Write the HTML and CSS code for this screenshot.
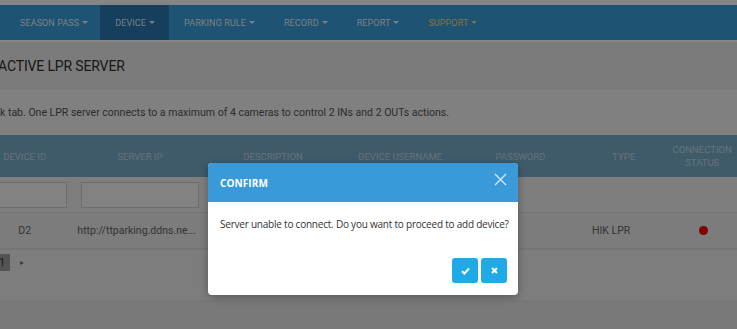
FILE: index.html
```html
<!DOCTYPE html>
<html>
<head>
<meta charset="utf-8">
<link rel="stylesheet" href="styles.css">
</head>
<body>
<div class="page">
  <div class="topstrip"></div>
  <nav class="nav">
    <ul class="menu">
      <li class="item">SEASON PASS <span class="caret"></span></li>
      <li class="item active">DEVICE <span class="caret"></span></li>
      <li class="item">PARKING RULE <span class="caret"></span></li>
      <li class="item">RECORD <span class="caret"></span></li>
      <li class="item">REPORT <span class="caret"></span></li>
      <li class="item support">SUPPORT <span class="caret"></span></li>
    </ul>
  </nav>
  <div class="content">
    <div class="titlebar"><h1 class="title">ACTIVE LPR SERVER</h1></div>
    <div class="info">ick tab. One LPR server connects to a maximum of 4 cameras to control 2 INs and 2 OUTs actions.</div>
    <div class="table">
      <div class="row head">
        <div class="c c1">DEVICE ID</div>
        <div class="c c2">SERVER IP</div>
        <div class="c c3">DESCRIPTION</div>
        <div class="c c4">DEVICE USERNAME</div>
        <div class="c c5">PASSWORD</div>
        <div class="c c6">TYPE</div>
        <div class="c c7">CONNECTION<br>STATUS</div>
      </div>
      <div class="row filters">
        <div class="c c1"><div class="input narrow"></div></div>
        <div class="c c2"><div class="input"></div></div>
        <div class="c c3"></div>
        <div class="c c4"></div>
        <div class="c c5"></div>
        <div class="c c6"></div>
        <div class="c c7"></div>
      </div>
      <div class="row data">
        <div class="c c1">D2</div>
        <div class="c c2 ip">http://ttparking.ddns.ne...</div>
        <div class="c c3"></div>
        <div class="c c4"></div>
        <div class="c c5"></div>
        <div class="c c6 type">HIK LPR</div>
        <div class="c c7"><span class="dot"></span></div>
      </div>
    </div>
    <div class="pager">
      <span class="pbox">1</span>
      <span class="parrow">&#9656;</span>
    </div>
    <div class="footer"></div>
  </div>
</div>

<div class="backdrop"></div>
<div class="modal">
  <div class="mhead">
    <span class="mtitle">CONFIRM</span>
    <svg class="close" width="13" height="13" viewBox="0 0 13 13"><path d="M1 1L12 12M12 1L1 12" stroke="#d8ecf8" stroke-width="1.3" fill="none"/></svg>
  </div>
  <div class="mbody">Server unable to connect. Do you want to proceed to add device?</div>
  <div class="mfoot">
    <button class="btn"><svg width="9" height="8" viewBox="0 0 9 8"><path d="M1 4.2L3.4 6.5L8 1.5" stroke="#fff" stroke-width="2" fill="none"/></svg></button>
    <button class="btn"><svg width="7" height="7" viewBox="0 0 7 7"><path d="M1 1L6 6M6 1L1 6" stroke="#fff" stroke-width="2" fill="none"/></svg></button>
  </div>
</div>
</body>
</html>
```

FILE: styles.css
```css
* { box-sizing: border-box; }
html, body { margin: 0; padding: 0; }
body {
  width: 737px;
  height: 329px;
  overflow: hidden;
  font-family: Roboto, "Liberation Sans", sans-serif;
  background: #f3f3f3;
  position: relative;
}
.page { width: 737px; height: 329px; display: flex; flex-direction: column; }
.topstrip { height: 5px; background: #ffffff; }
.nav { height: 35px; background: #3aa0df; }
.menu {
  list-style: none; margin: 0; padding: 0 0 0 5px;
  display: flex; height: 100%;
}
.item {
  display: flex; align-items: center;
  padding: 0 14px 0 15px;
  font-size: 9px;
  color: rgba(255,255,255,0.9);
  letter-spacing: 0.1px;
}
.item.active { background: #2a79b1; margin-left: -2px; }
.item.support { color: #f4dd78; }
.caret {
  display: inline-block; width: 0; height: 0; margin-left: 3px;
  border-left: 3px solid transparent; border-right: 3px solid transparent;
  border-top: 3px solid currentColor;
}
.content { flex: 1; display: flex; flex-direction: column; }
.titlebar { height: 50px; background: #ececec; display: flex; align-items: center; border-top: 2px solid #ffffff; }
.title {
  margin: 0 0 0 -2px; font-weight: 400; font-size: 14px; color: #2f2f2f;
  letter-spacing: -0.15px;
}
.info {
  height: 45px; background: #f6f6f6;
  display: flex; align-items: center;
  font-size: 10.5px; color: #555;
  margin-left: -8px;
  white-space: nowrap;
}
.table { display: flex; flex-direction: column; margin-left: -24px; }
.row { display: flex; }
.c { display: flex; align-items: center; justify-content: center; text-align: center; }
.c1 { width: 98px; }
.c2 { width: 134px; }
.c3 { width: 134px; }
.c4 { width: 122px; }
.c5 { width: 120px; }
.c6 { width: 88px; }
.c7 { width: 70px; }
.head { height: 42px; background: #7aafcc; color: rgba(255,255,255,0.55); font-size: 9.5px; line-height: 13px; }
.filters { height: 36px; background: #f1f1f1; border-bottom: 1px solid #e0e0e0; }
.input { width: 118px; height: 26px; background: #fafafa; border: 1px solid #d2d2d2; }
.input.narrow { width: 84px; }
.data { height: 37px; background: #ededed; border-bottom: 2px solid #e0e0e0; font-size: 10.5px; color: #666; }
.ip { justify-content: flex-start; padding-left: 4px; }
.type { justify-content: flex-start; padding-left: 12px; }
.dot { width: 9px; height: 9px; border-radius: 50%; background: #f20000; margin-left: 2px; }
.pager { height: 52px; display: flex; align-items: flex-start; padding-top: 4px; gap: 10px; margin-left: -6px; background: #f0f0f0; border-bottom: 2px solid #e6e6e6; }
.pbox { width: 16px; height: 17px; background: #a0a0a0; color: #333; font-size: 11px; display: flex; align-items: center; justify-content: center; }
.parrow { font-size: 8px; color: #777; margin-top: 4px; }
.footer { flex: 1; background: #e8e8e8; }

.backdrop { position: absolute; inset: 0; background: rgba(0,0,0,0.48); }
.modal {
  position: absolute; left: 208px; top: 163px; width: 310px; height: 132px;
  background: #fff; border-radius: 4px; overflow: hidden;
  box-shadow: 0 2px 8px rgba(0,0,0,0.3);
  display: flex; flex-direction: column;
}
.mhead {
  height: 39px; background: #3a9ad9; display: flex; align-items: center;
  justify-content: space-between; padding: 0 11px 0 12px;
}
.mtitle { color: #fff; font-weight: 700; font-size: 10px; letter-spacing: 0.1px; font-family: "Open Sans", sans-serif; }
.close { margin-top: -6px; }
.mbody {
  padding: 15px 8px 0 12px; font-size: 10px; color: #333;
  font-family: "Open Sans", sans-serif; letter-spacing: -0.22px;
  white-space: nowrap;
}
.mfoot { margin-top: auto; display: flex; justify-content: flex-end; gap: 3px; padding: 0 11px 12px 0; }
.btn {
  width: 26px; height: 25px; border: 0; border-radius: 3px; padding: 0;
  background: #1eaae6; display: flex; align-items: center; justify-content: center;
}
```
